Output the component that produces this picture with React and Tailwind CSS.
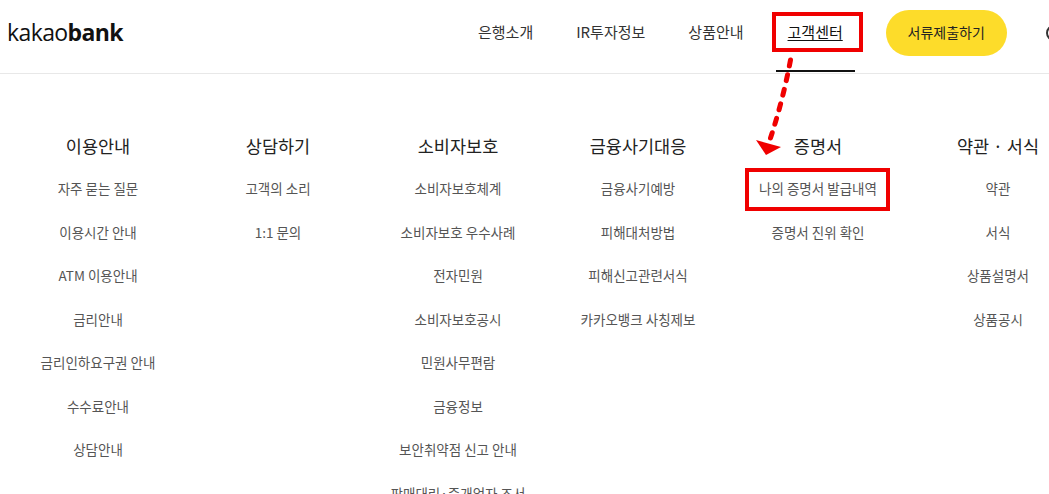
const FONT = "font-['Noto_Sans_CJK_KR','Noto_Sans',sans-serif]";

const NAV = ["은행소개", "IR투자정보", "상품안내"];

const MENU = [
  {
    title: "이용안내",
    items: ["자주 묻는 질문", "이용시간 안내", "ATM 이용안내", "금리안내", "금리인하요구권 안내", "수수료안내", "상담안내"],
  },
  { title: "상담하기", items: ["고객의 소리", "1:1 문의"] },
  {
    title: "소비자보호",
    items: [
      "소비자보호체계",
      "소비자보호 우수사례",
      "전자민원",
      "소비자보호공시",
      "민원사무편람",
      "금융정보",
      "보안취약점 신고 안내",
      "판매대리·중개업자 조서",
    ],
  },
  { title: "금융사기대응", items: ["금융사기예방", "피해대처방법", "피해신고관련서식", "카카오뱅크 사칭제보"] },
  { title: "증명서", items: ["나의 증명서 발급내역", "증명서 진위 확인"] },
  { title: "약관 · 서식", items: ["약관", "서식", "상품설명서", "상품공시"] },
];

function Header() {
  return (
    <header className="flex h-[74px] items-center border-b border-[#e8e8e8] pb-[8px] pl-[7px]">
      <div className="w-[471px] shrink-0 font-['Open_Sans',sans-serif] text-[23px] leading-none tracking-[-0.6px] text-[#111]">
        kakao<span className="font-bold">bank</span>
      </div>
      <nav className="flex shrink-0 items-center gap-[43px] text-[15px] text-[#333]">
        {NAV.map((label) => (
          <a key={label}>{label}</a>
        ))}
        <a className="relative ml-px text-[#111] underline underline-offset-2">
          고객센터
          <span className="absolute top-[49px] -left-[12px] h-[2px] w-[79px] bg-[#111]" />
        </a>
        <button className="h-[46px] w-[121px] rounded-full bg-[#fddc2a] text-[14px] text-[#222]">
          서류제출하기
        </button>
        <span className="ml-[-4px] h-[16px] w-[16px] rounded-full border-2 border-[#333]" />
      </nav>
    </header>
  );
}

function Menu() {
  return (
    <div className="flex w-[1080px] pt-[58px] pl-[8px]">
      {MENU.map((col) => (
        <section key={col.title} className="w-[180px] shrink-0 text-center">
          <h2 className="h-[27px] text-[17.5px] leading-[27px] text-[#222]">{col.title}</h2>
          <ul className="mt-[16px] flex flex-col gap-[17.5px]">
            {col.items.map((item) => (
              <li key={item} className="h-[26px] text-[13.5px] leading-[26px] whitespace-nowrap text-[#555]">
                {item}
              </li>
            ))}
          </ul>
        </section>
      ))}
    </div>
  );
}

export default function App() {
  return (
    <div className={`relative h-[494px] w-[1049px] overflow-hidden bg-white ${FONT}`}>
      <Header />
      <Menu />

      {/* red annotations on top of the screenshot */}
      <div className="absolute top-[12px] left-[772px] h-[40px] w-[91px] border-4 border-[#f00000]" />
      <div className="absolute top-[168px] left-[745px] h-[43px] w-[145px] border-4 border-[#f00000]" />
      <svg className="absolute top-0 left-0" width="1049" height="494">
        <path
          d="M790.5 60 Q783 100 770.5 138"
          fill="none"
          stroke="#f00000"
          strokeWidth="5"
          strokeDasharray="6 9"
          strokeLinecap="round"
        />
        <polygon points="756,140 781,147 766,155" fill="#f00000" />
      </svg>
    </div>
  );
}
